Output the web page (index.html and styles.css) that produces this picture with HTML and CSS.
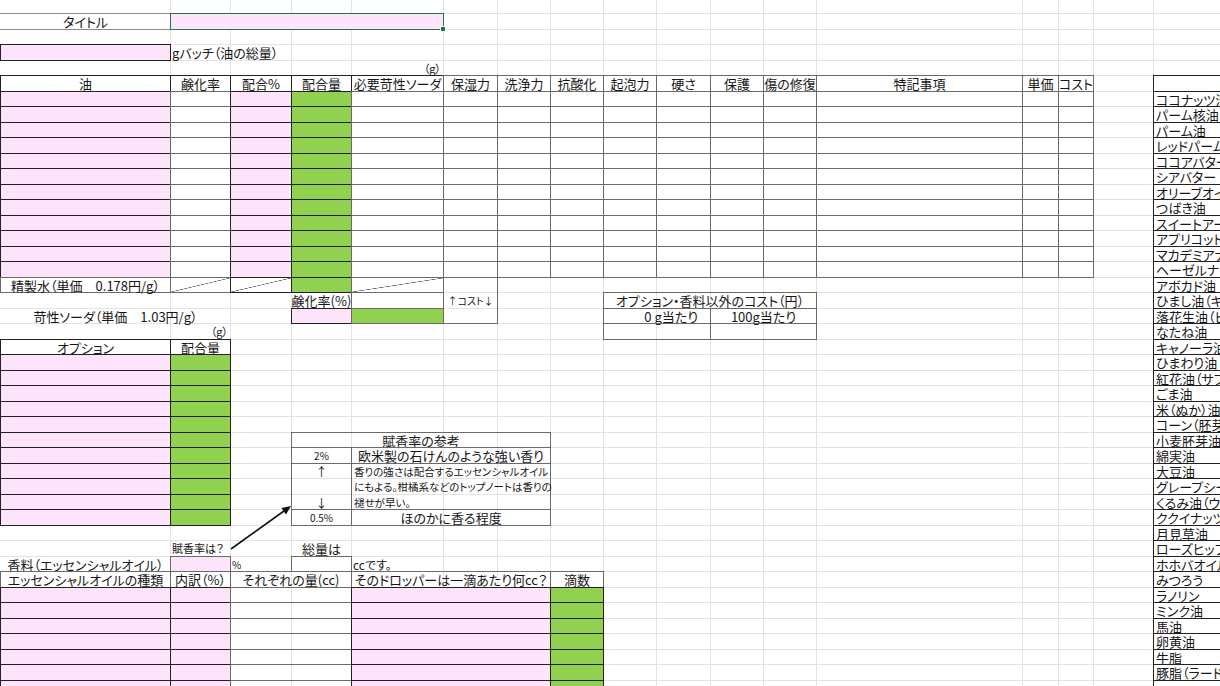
FILE: index.html
```html
<!DOCTYPE html>
<html lang="ja">
<head>
<meta charset="utf-8">
<title>石けんレシピ計算表</title>
<link rel="stylesheet" href="styles.css">
</head>
<body>
<div class="sheet">
<div class="row r0"></div>
<div class="row"><div class="tb">タイトル</div><div class="s4 pk sel"></div></div>
<div class="row"></div>
<div class="row"><div class="pk k"></div><div class="l">gバッチ（油の総量）</div></div>
<div class="row"><div class="cE r unit">（g）</div></div>
<div class="row"><div class="k">油</div><div class="k">鹸化率</div><div class="k">配合%</div><div class="k">配合量</div><div class="k">必要苛性ソーダ</div><div class="b">保湿力</div><div class="b">洗浄力</div><div class="b">抗酸化</div><div class="b">起泡力</div><div class="b">硬さ</div><div class="b">保護</div><div class="b">傷の修復</div><div class="b">特記事項</div><div class="b">単価</div><div class="b">コスト</div><div class="cQ k"></div></div>
<div class="row"><div class="pk k"></div><div class="b"></div><div class="pk k"></div><div class="gr k"></div><div class="b"></div><div class="b"></div><div class="b"></div><div class="b"></div><div class="b"></div><div class="b"></div><div class="b"></div><div class="b"></div><div class="b"></div><div class="b"></div><div class="b"></div><div class="cQ k l li">ココナッツ油</div></div>
<div class="row"><div class="pk k"></div><div class="b"></div><div class="pk k"></div><div class="gr k"></div><div class="b"></div><div class="b"></div><div class="b"></div><div class="b"></div><div class="b"></div><div class="b"></div><div class="b"></div><div class="b"></div><div class="b"></div><div class="b"></div><div class="b"></div><div class="cQ k l li">パーム核油</div></div>
<div class="row"><div class="pk k"></div><div class="b"></div><div class="pk k"></div><div class="gr k"></div><div class="b"></div><div class="b"></div><div class="b"></div><div class="b"></div><div class="b"></div><div class="b"></div><div class="b"></div><div class="b"></div><div class="b"></div><div class="b"></div><div class="b"></div><div class="cQ k l li">パーム油</div></div>
<div class="row"><div class="pk k"></div><div class="b"></div><div class="pk k"></div><div class="gr k"></div><div class="b"></div><div class="b"></div><div class="b"></div><div class="b"></div><div class="b"></div><div class="b"></div><div class="b"></div><div class="b"></div><div class="b"></div><div class="b"></div><div class="b"></div><div class="cQ k l li">レッドパーム油</div></div>
<div class="row"><div class="pk k"></div><div class="b"></div><div class="pk k"></div><div class="gr k"></div><div class="b"></div><div class="b"></div><div class="b"></div><div class="b"></div><div class="b"></div><div class="b"></div><div class="b"></div><div class="b"></div><div class="b"></div><div class="b"></div><div class="b"></div><div class="cQ k l li">ココアバター</div></div>
<div class="row"><div class="pk k"></div><div class="b"></div><div class="pk k"></div><div class="gr k"></div><div class="b"></div><div class="b"></div><div class="b"></div><div class="b"></div><div class="b"></div><div class="b"></div><div class="b"></div><div class="b"></div><div class="b"></div><div class="b"></div><div class="b"></div><div class="cQ k l li">シアバター</div></div>
<div class="row"><div class="pk k"></div><div class="b"></div><div class="pk k"></div><div class="gr k"></div><div class="b"></div><div class="b"></div><div class="b"></div><div class="b"></div><div class="b"></div><div class="b"></div><div class="b"></div><div class="b"></div><div class="b"></div><div class="b"></div><div class="b"></div><div class="cQ k l li">オリーブオイル</div></div>
<div class="row"><div class="pk k"></div><div class="b"></div><div class="pk k"></div><div class="gr k"></div><div class="b"></div><div class="b"></div><div class="b"></div><div class="b"></div><div class="b"></div><div class="b"></div><div class="b"></div><div class="b"></div><div class="b"></div><div class="b"></div><div class="b"></div><div class="cQ k l li">つばき油</div></div>
<div class="row"><div class="pk k"></div><div class="b"></div><div class="pk k"></div><div class="gr k"></div><div class="b"></div><div class="b"></div><div class="b"></div><div class="b"></div><div class="b"></div><div class="b"></div><div class="b"></div><div class="b"></div><div class="b"></div><div class="b"></div><div class="b"></div><div class="cQ k l li">スイートアーモンド油</div></div>
<div class="row"><div class="pk k"></div><div class="b"></div><div class="pk k"></div><div class="gr k"></div><div class="b"></div><div class="b"></div><div class="b"></div><div class="b"></div><div class="b"></div><div class="b"></div><div class="b"></div><div class="b"></div><div class="b"></div><div class="b"></div><div class="b"></div><div class="cQ k l li">アプリコット核油</div></div>
<div class="row"><div class="pk k"></div><div class="b"></div><div class="pk k"></div><div class="gr k"></div><div class="b"></div><div class="b"></div><div class="b"></div><div class="b"></div><div class="b"></div><div class="b"></div><div class="b"></div><div class="b"></div><div class="b"></div><div class="b"></div><div class="b"></div><div class="cQ k l li">マカデミアナッツ油</div></div>
<div class="row"><div class="pk k"></div><div class="b"></div><div class="pk k"></div><div class="gr k"></div><div class="b"></div><div class="b"></div><div class="b"></div><div class="b"></div><div class="b"></div><div class="b"></div><div class="b"></div><div class="b"></div><div class="b"></div><div class="b"></div><div class="b"></div><div class="cQ k l li">ヘーゼルナッツ油</div></div>
<div class="row"><div class="b">精製水（単価　0.178円/g）</div><div class="b dg"></div><div class="k dg"></div><div class="gr k"></div><div class="b dg"></div><div class="lr"></div><div class="cQ k l li">アボカド油</div></div>
<div class="row"><div class="cD">鹸化率(%)</div><div class="b"></div><div class="lr sm">↑コスト↓</div><div class="cI s4 b">オプション・香料以外のコスト（円）</div><div class="cQ k l li">ひまし油（キャスター）</div></div>
<div class="row"><div class="s2">苛性ソーダ（単価　1.03円/g）</div><div class="cD pk k"></div><div class="gr b"></div><div class="lrb"></div><div class="cI s2 b r per">0 g当たり</div><div class="s2 b">100g当たり</div><div class="cQ k l li">落花生油（ピーナッツ）</div></div>
<div class="row"><div class="cB r unit">（g）</div><div class="cI s2 b"></div><div class="s2 b"></div><div class="cQ k l li">なたね油</div></div>
<div class="row"><div class="k">オプション</div><div class="k">配合量</div><div class="cQ k l li">キャノーラ油</div></div>
<div class="row"><div class="pk k"></div><div class="gr k"></div><div class="cQ k l li">ひまわり油（サンフラワー）</div></div>
<div class="row"><div class="pk k"></div><div class="gr k"></div><div class="cQ k l li">紅花油（サフラワー）</div></div>
<div class="row"><div class="pk k"></div><div class="gr k"></div><div class="cQ k l li">ごま油</div></div>
<div class="row"><div class="pk k"></div><div class="gr k"></div><div class="cQ k l li">米（ぬか）油</div></div>
<div class="row"><div class="pk k"></div><div class="gr k"></div><div class="cQ k l li">コーン（胚芽）油</div></div>
<div class="row"><div class="pk k"></div><div class="gr k"></div><div class="cD s4 b">賦香率の参考</div><div class="cQ k l li">小麦胚芽油</div></div>
<div class="row"><div class="pk k"></div><div class="gr k"></div><div class="cD b sm">2%</div><div class="s3 b">欧米製の石けんのような強い香り</div><div class="cQ k l li">綿実油</div></div>
<div class="row"><div class="pk k"></div><div class="gr k"></div><div class="cD lr ar">↑</div><div class="s3 lr l note">香りの強さは配合するエッセンシャルオイル</div><div class="cQ k l li">大豆油</div></div>
<div class="row"><div class="pk k"></div><div class="gr k"></div><div class="cD lr"></div><div class="s3 lr l note">にもよる。柑橘系などのトップノートは香りの</div><div class="cQ k l li">グレープシード油</div></div>
<div class="row"><div class="pk k"></div><div class="gr k"></div><div class="cD lr ar">↓</div><div class="s3 lr l note">褪せが早い。</div><div class="cQ k l li">くるみ油（ウォルナッツ）</div></div>
<div class="row"><div class="pk k"></div><div class="gr k"></div><div class="cD b sm">0.5%</div><div class="s3 b">ほのかに香る程度</div><div class="cQ k l li">ククイナッツ油</div></div>
<div class="row"><div class="cQ k l li">月見草油</div></div>
<div class="row"><div class="cB l ask">賦香率は？</div><div class="cD">総量は</div><div class="cQ k l li">ローズヒップ油</div></div>
<div class="row"><div>香料（エッセンシャルオイル）</div><div class="pk b"></div><div class="l sm">%</div><div class="b"></div><div class="l cc">ccです。</div><div class="cQ k l li">ホホバオイル</div></div>
<div class="row"><div class="b">エッセンシャルオイルの種類</div><div class="b">内訳（%）</div><div class="s2 b">それぞれの量(cc)</div><div class="s3 b">そのドロッパーは一滴あたり何cc？</div><div class="b">滴数</div><div class="cQ k l li">みつろう</div></div>
<div class="row"><div class="pk k"></div><div class="pk k"></div><div class="s2 b"></div><div class="s3 pk k"></div><div class="gr k"></div><div class="cQ k l li">ラノリン</div></div>
<div class="row"><div class="pk k"></div><div class="pk k"></div><div class="s2 b"></div><div class="s3 pk k"></div><div class="gr k"></div><div class="cQ k l li">ミンク油</div></div>
<div class="row"><div class="pk k"></div><div class="pk k"></div><div class="s2 b"></div><div class="s3 pk k"></div><div class="gr k"></div><div class="cQ k l li">馬油</div></div>
<div class="row"><div class="pk k"></div><div class="pk k"></div><div class="s2 b"></div><div class="s3 pk k"></div><div class="gr k"></div><div class="cQ k l li">卵黄油</div></div>
<div class="row"><div class="pk k"></div><div class="pk k"></div><div class="s2 b"></div><div class="s3 pk k"></div><div class="gr k"></div><div class="cQ k l li">牛脂</div></div>
<div class="row"><div class="pk k"></div><div class="pk k"></div><div class="s2 b"></div><div class="s3 pk k"></div><div class="gr k"></div><div class="cQ k l li">豚脂（ラード）</div></div>
<div class="row"><div class="pk k"></div><div class="pk k"></div><div class="s2 b"></div><div class="s3 pk k"></div><div class="gr k"></div><div class="cQ k l li"></div></div>
<svg class="arrow" width="1220" height="686" viewBox="0 0 1220 686" aria-hidden="true">
<line x1="231" y1="549" x2="284" y2="511" stroke="#111" stroke-width="1.6"/>
<polygon points="291,506 286,514.5 281.4,507.9" fill="#111"/>
</svg>
</div>
</body>
</html>
```
FILE: styles.css
```css
html, body {
  margin: 0;
  padding: 0;
  overflow: hidden;
  background: #fff;
}
body {
  font-family: "Noto Sans CJK JP", "Noto Sans", sans-serif;
  font-size: 13px;
  color: #161616;
  font-feature-settings: "palt" 1;
}
.sheet {
  position: relative;
  width: 1273px;
  height: 686px;
  overflow: hidden;
  background-image:
    linear-gradient(90deg, transparent 0 170px, #e3e3e3 170px 171px, transparent 171px 230px, #e3e3e3 230px 231px, transparent 231px 291px, #e3e3e3 291px 292px, transparent 292px 351px, #e3e3e3 351px 352px, transparent 352px 443px, #e3e3e3 443px 444px, transparent 444px 497px, #e3e3e3 497px 498px, transparent 498px 550px, #e3e3e3 550px 551px, transparent 551px 603px, #e3e3e3 603px 604px, transparent 604px 656px, #e3e3e3 656px 657px, transparent 657px 710px, #e3e3e3 710px 711px, transparent 711px 763px, #e3e3e3 763px 764px, transparent 764px 816px, #e3e3e3 816px 817px, transparent 817px 1022px, #e3e3e3 1022px 1023px, transparent 1023px 1058px, #e3e3e3 1058px 1059px, transparent 1059px 1093px, #e3e3e3 1093px 1094px, transparent 1094px 1153px, #e3e3e3 1153px 1154px, transparent 1154px),
    linear-gradient(180deg, #e3e3e3 0 1px, transparent 1px 16px, #e3e3e3 16px 17px, transparent 17px);
  background-size: 100% 100%, 100% 31px;
  background-position: 0 0, 0 13px;
  background-repeat: no-repeat, repeat-y;
}
.row {
  display: grid;
  grid-template-columns: 170px 60px 61px 60px 92px 54px 53px 53px 53px 54px 53px 53px 206px 36px 35px 60px 120px;
  grid-template-rows: 100%;
  height: 15px;
}
.row:nth-child(even) { height: 16px; }
.row.r0 { height: 13px; }
.row > div {
  box-sizing: border-box;
  margin: 0 -1px -1px 0;
  display: flex;
  align-items: center;
  justify-content: center;
  white-space: nowrap;
  line-height: 13px;
  min-width: 0;
}

/* column starts */
.cB { grid-column-start: 2; }
.cD { grid-column-start: 4; }
.cE { grid-column-start: 5; }
.cI { grid-column-start: 9; }
.cQ { grid-column-start: 17; }
/* spans */
.s2 { grid-column-end: span 2; }
.s3 { grid-column-end: span 3; }
.s4 { grid-column-end: span 4; }

/* borders */
.b { border: 1px solid #6a6a6a; }
.k { border: 1px solid #222; }
.tb { border-top: 1px solid #8a8a8a; border-bottom: 1px solid #8a8a8a; }
.lr { border-left: 1px solid #6a6a6a; border-right: 1px solid #6a6a6a; }
.lrb { border: 1px solid #6a6a6a; border-top: 0; }

/* fills */
.pk { background: #fde4fb; }
.gr { background: #92d050; }
.dg { background: linear-gradient(to bottom right, transparent calc(50% - 0.6px), #5a5a5a 50%, transparent calc(50% + 0.6px)); }

/* alignment */
.row > .l { justify-content: flex-start; padding-left: 2px; }
.row > .r { justify-content: flex-end; padding-right: 3px; }
.row > .per { padding-right: 12px; }

/* text sizes */
.sm { font-size: 10px; }
.unit { font-size: 11px; }
.note { font-size: 10.5px; }
.ask { font-size: 11px; }
.cc { font-size: 12px; }
.ar { font-size: 12px; }
.li { font-size: 13px; overflow: hidden; }

/* selected title cell */
.row > .sel {
  position: relative;
  border: 1px solid #227447;
}
.sel::after {
  content: "";
  position: absolute;
  right: -3px;
  bottom: -3px;
  width: 4px;
  height: 4px;
  background: #227447;
  border: 1px solid #fff;
}

.arrow {
  position: absolute;
  left: 0;
  top: 0;
  pointer-events: none;
}
```
